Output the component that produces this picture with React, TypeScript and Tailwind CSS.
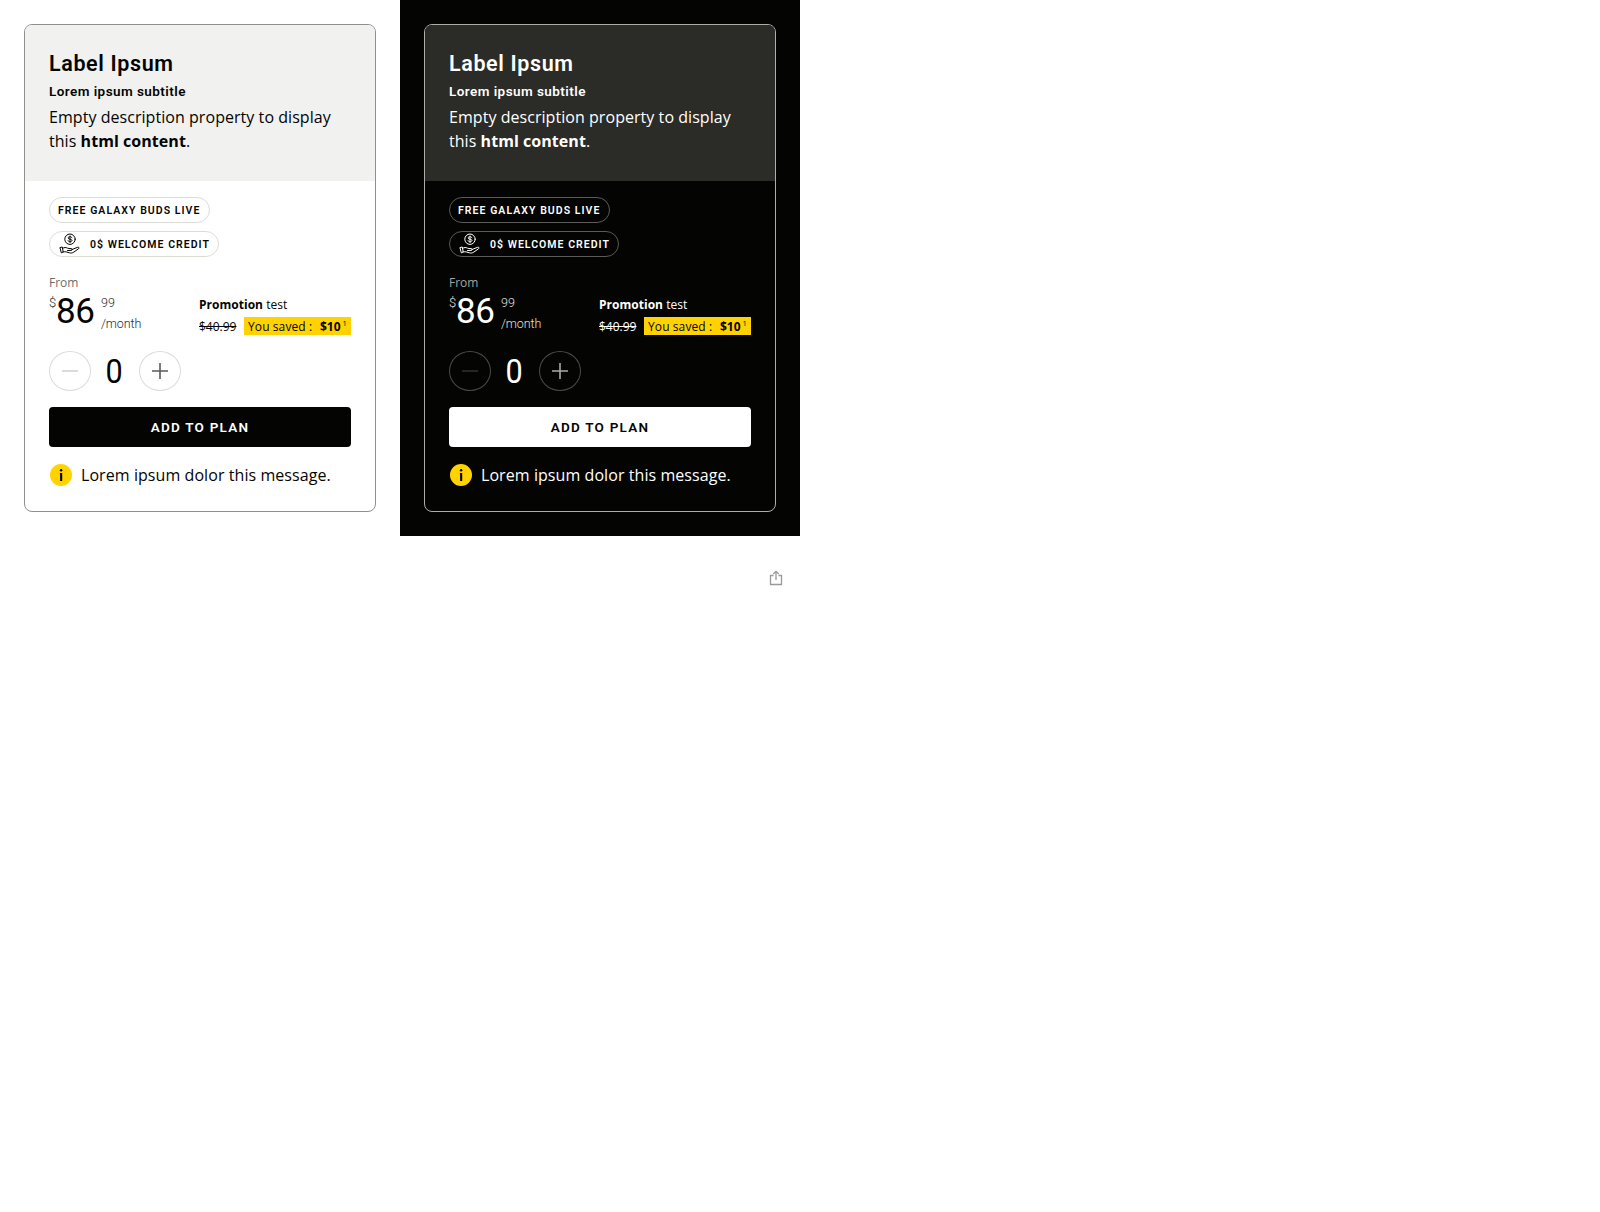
import React from "react";

type Theme = {
  page: string;
  text: string;
  card: string;
  header: string;
  pill: string;
  muted: string;
  soft: string;
  circle: string;
  minus: string;
  plus: string;
  button: string;
};

const light: Theme = {
  page: "bg-white",
  text: "text-[#040402]",
  card: "border-[#8f8f8b]",
  header: "bg-[#f1f1ef]",
  pill: "border-[#dcdcd7]",
  muted: "text-[#6c6c6a]",
  soft: "text-[#2b2b27]",
  circle: "border-[#dcdcd7]",
  minus: "text-[#cfcfca]",
  plus: "text-[#5a5a58]",
  button: "bg-[#040402] text-white",
};

const dark: Theme = {
  page: "bg-[#040402]",
  text: "text-white",
  card: "border-[#aeaea9]",
  header: "bg-[#2b2b27]",
  pill: "border-[#5b5b57]",
  muted: "text-[#a5a5a2]",
  soft: "text-[#e0e0de]",
  circle: "border-[#4b4b47]",
  minus: "text-[#32322f]",
  plus: "text-[#a9a9a7]",
  button: "bg-white text-[#040402]",
};

const display = "font-['Roboto',sans-serif]";

function CreditIcon() {
  return (
    <svg width="22" height="22" viewBox="0 0 22 22" fill="none" stroke="currentColor" strokeWidth="1" strokeLinecap="round" strokeLinejoin="round">
      <circle cx="11" cy="6.2" r="5.2" />
      <path d="M12.9 4.800c-.3-.7-1-1-1.900-1-1.100 0-1.900.4-1.900 1.200 0 1.700 3.900.7 3.900 2.500 0 .8-.9 1.200-2 1.200-1 0-1.800-.4-2-1.100M11 3v6.500" />
      <path d="M1.300 14.500l2-.5.900 5-1.500.7zM3.700 15.300c1.500-1 3.200-1 4.700-.2 1 .5 2 .5 3.600.5 1.500 0 1.600 1.600.2 1.800l-3.700.1M13 16.500l5.300-2.100c1.600-.6 2.400.5 1.200 1.400l-4.700 3.300c-1.400 1-2.800 1.100-4.400.7l-3.200-.9c-1.100-.3-1.900-.2-3 .1" />
    </svg>
  );
}

function InfoIcon() {
  return (
    <svg width="22" height="22" viewBox="0 0 22 22">
      <circle cx="11" cy="11" r="11" fill="#ffd200" />
      <circle cx="11.100" cy="6.200" r="1.250" fill="#040402" />
      <path d="M9.900 9h2.300v8h-2.100v-6.500h-.2z" fill="#040402" />
    </svg>
  );
}

function OfferCard({ theme: t }: { theme: Theme }) {
  return (
    <section className={`h-[536px] w-[400px] p-6 ${t.page} ${t.text}`}>
      <div className={`h-[488px] w-[352px] overflow-hidden rounded-lg border ${t.card}`}>
        <header className={`h-[156px] whitespace-nowrap px-6 pt-[25px] ${t.header}`}>
          <h2 className={`${display} h-7 text-[21.500px] font-semibold leading-7 tracking-[0.620px]`}>Label Ipsum</h2>
          <h3 className={`${display} mt-[3px] h-5 text-[13.500px] font-semibold leading-5 tracking-[0.440px]`}>Lorem ipsum subtitle</h3>
          <p className="mt-1 text-base leading-6 tracking-[0.050px]">
            Empty description property to display
            <br />
            this <strong>html content</strong>.
          </p>
        </header>

        <div className="flex flex-col items-start whitespace-nowrap px-6 pt-4">
          <div className={`flex h-[26px] w-[161px] items-center rounded-full border pl-2 pt-px ${display} text-[10.500px] font-semibold tracking-[1.050px] ${t.pill}`}>
            <span>FREE GALAXY BUDS LIVE</span>
          </div>
          <div className={`mt-2 flex h-[26px] w-[170px] items-center rounded-full border pl-[9px] ${display} text-[10.500px] font-semibold tracking-[1.020px] ${t.pill}`}>
            <CreditIcon />
            <span className="ml-[9px] pt-px">0$ WELCOME CREDIT</span>
          </div>

          <div className="mt-4 flex h-[62px] w-full justify-between">
            <div>
              <div className={`h-5 text-xs leading-5 ${t.muted}`}>From</div>
              <div className={`${display} flex h-10 items-start font-light`}>
                <span className={`mt-[2px] w-[7px] text-[13px] leading-4 ${t.soft}`}>$</span>
                <span className="mt-[-1px] w-[45px] text-[35px] font-normal leading-10 tracking-[-0.300px]">86</span>
                <span className={`text-[12.500px] leading-4 ${t.soft}`}>
                  <span className="mt-[2px] block h-4">99</span>
                  <span className="mt-[5px] block h-4 tracking-[-0.100px]">/month</span>
                </span>
              </div>
            </div>
            <div className="mt-[23px] w-[152px] text-xs">
              <div className="h-[21px] leading-[18px] tracking-[0.020px]">
                <strong>Promotion</strong> test
              </div>
              <div className="flex h-[18px] items-center justify-between leading-5">
                <span className="pt-px line-through">$40.99</span>
                <span className="flex h-[18px] w-[107px] bg-[#ffd200] pl-1 text-[#040402]">
                  <span className="w-[72px] tracking-[0.100px]">You saved :</span>
                  <strong>$10</strong>
                  <span className="ml-[2px] mt-[-4px] text-[7.500px]">1</span>
                </span>
              </div>
            </div>
          </div>

          <div className="mt-4 flex h-10 items-center">
            <button aria-label="Decrease" className={`flex h-10 w-[42px] items-center justify-center rounded-[50%] border ${t.circle} ${t.minus}`}>
              <svg width="16" height="16" viewBox="0 0 16 16" stroke="currentColor" strokeWidth="1.500"><path d="M0 8h16" /></svg>
            </button>
            <span className={`${display} w-12 scale-x-90 pr-[2px] text-center text-[34px] leading-10`}>0</span>
            <button aria-label="Increase" className={`flex h-10 w-[42px] items-center justify-center rounded-[50%] border ${t.circle} ${t.plus}`}>
              <svg width="16" height="16" viewBox="0 0 16 16" stroke="currentColor" strokeWidth="1.600"><path d="M0 8h16M8 0v16" /></svg>
            </button>
          </div>

          <button className={`${display} mt-4 h-10 w-full rounded text-[13.500px] font-semibold leading-10 tracking-[1.230px] ${t.button}`}>
            ADD TO PLAN
          </button>

          <div className="mt-4 flex h-6 items-center pl-px">
            <InfoIcon />
            <p className="ml-[9px] text-base leading-6 tracking-[0.070px]">Lorem ipsum dolor this message.</p>
          </div>
        </div>
      </div>
    </section>
  );
}

export default function App() {
  return (
    <main className="min-h-screen bg-white font-['Open_Sans',sans-serif]">
      <div className="flex">
        <OfferCard theme={light} />
        <OfferCard theme={dark} />
      </div>
      <div className="flex w-[800px] justify-end pr-[17px] pt-[34px]">
        <svg width="14" height="16" viewBox="0 0 14 16" fill="none" stroke="#999" strokeWidth="1.300">
          <path d="M4.500 5.500H1.500v9h11v-9H9.500M7 10V1.500M4.300 4L7 1.300 9.700 4" />
        </svg>
      </div>
    </main>
  );
}
